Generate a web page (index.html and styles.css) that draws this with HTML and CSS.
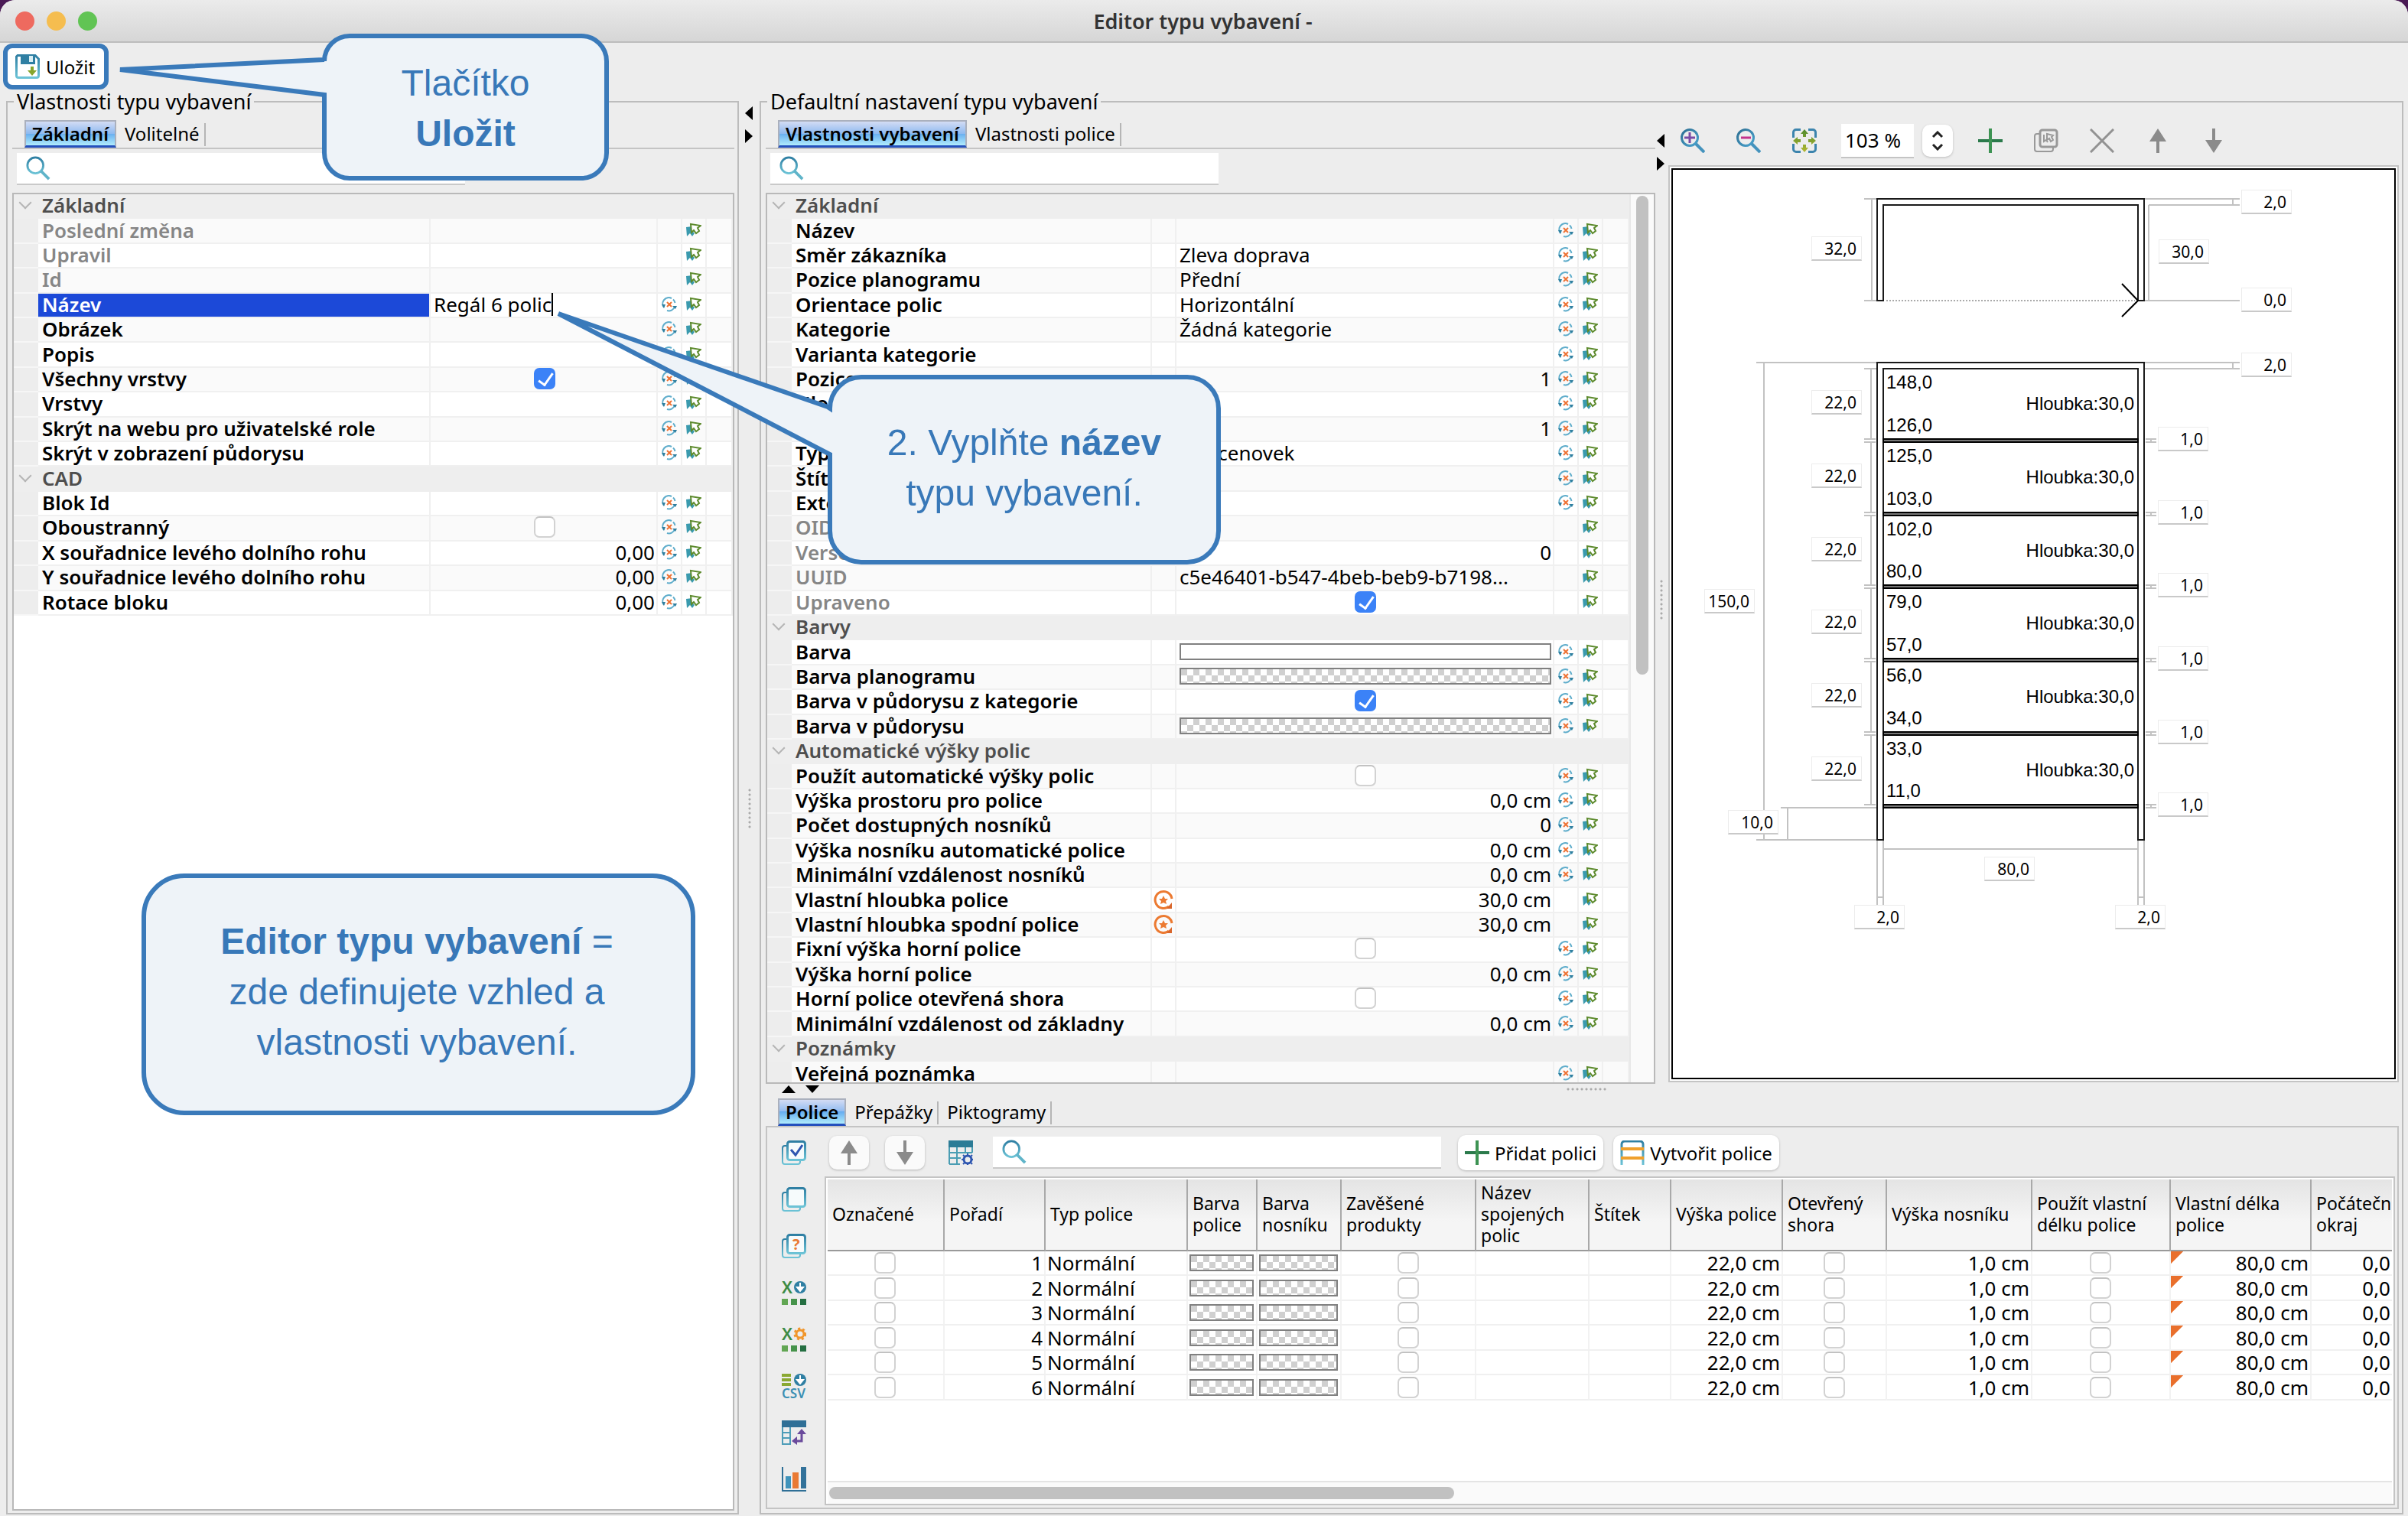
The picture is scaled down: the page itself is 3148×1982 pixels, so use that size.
FILE: index.html
```
<!DOCTYPE html>
<html lang="cs">
<head>
	<meta charset="UTF-8">
	<title>Editor typu vybavení</title>
	<link rel="stylesheet" href="styles.css">
</head>
<body>
	<!-- icons -->
	<svg class="defs" width="0" height="0" aria-hidden="true">
		<defs>
			<linearGradient id="teal" x1="0" y1="0" x2="0" y2="1"><stop offset="0" stop-color="#2f7fa3"/><stop offset="1" stop-color="#6cc3d6"/></linearGradient>
			<linearGradient id="blue" x1="0" y1="0" x2="1" y2="1"><stop offset="0" stop-color="#2d6f92"/><stop offset="1" stop-color="#4aa3cf"/></linearGradient>
			<linearGradient id="lime" x1="0" y1="0" x2="0" y2="1"><stop offset="0" stop-color="#4f8a2f"/><stop offset="1" stop-color="#b3b82e"/></linearGradient>
		</defs>
		<symbol id="i-search" viewBox="0 0 34 34"><circle cx="13" cy="13" r="11" fill="none" stroke="url(#teal)" stroke-width="3"/><path d="M21 21L32 32" stroke="#5fb4c9" stroke-width="4"/></symbol>
		<symbol id="i-save" viewBox="0 0 32 32"><path d="M3 1.500H26L30.500 6V28a2.500 2.500 0 0 1-2.500 2.500H4A2.500 2.500 0 0 1 1.500 28V3z" fill="#fff" stroke="url(#teal)" stroke-width="3"/><path d="M7 1H26V13H7z" fill="#2f7fa3"/><path d="M18 2h5v8h-5z" fill="#d8eef4"/><path d="M20 16h4v5h4l-6 7-6-7h4z" fill="#86a52c"/></symbol>
		<symbol id="i-reset" viewBox="0 0 20 20"><path d="M3 14A8 8 0 0 1 13 2M15 3.500A8 8 0 0 1 17.500 8M17 13A8 8 0 0 1 7 18" fill="none" stroke="#5fadcb" stroke-width="2"/><path d="M0 10h5l-2 5zM20 12h-6l4 4z" fill="#2f7f9f"/><path d="M7 7l6 6M13 7l-6 6" stroke="#ee7132" stroke-width="2"/></symbol>
		<symbol id="i-copy" viewBox="0 0 20 20"><path d="M0 6L8 5V11L11 14 8 18 5 14 1 18z" fill="#3a9aae"/><path d="M6 2L19 4 15 7 17 11 13 14 10 10 7 13z" fill="#fff" stroke="#5c8a2c" stroke-width="2"/></symbol>
		<symbol id="i-star" viewBox="0 0 26 26"><path d="M24 12A11 11 0 1 0 20 22" fill="none" stroke="#ec7a31" stroke-width="3"/><path d="M24 17v8h-7z" fill="#d9662b"/><path d="M13 8l2 4 4 0-3 3 1 4-4-2-4 2 1-4-3-3 4 0z" fill="#ec7a31"/></symbol>
		<symbol id="i-zoomin" viewBox="0 0 32 32"><circle cx="12" cy="12" r="10.500" fill="none" stroke="url(#blue)" stroke-width="3"/><path d="M20 20L31 31" stroke="#4593bd" stroke-width="4"/><path d="M5 12h14M12 5v14" stroke="#7a4aa6" stroke-width="3"/></symbol>
		<symbol id="i-zoomout" viewBox="0 0 32 32"><circle cx="12" cy="12" r="10.500" fill="none" stroke="url(#blue)" stroke-width="3"/><path d="M20 20L31 31" stroke="#4593bd" stroke-width="4"/><path d="M6 12h13" stroke="#c2328c" stroke-width="3"/></symbol>
		<symbol id="i-fit" viewBox="0 0 32 32"><path d="M11 1.500H5A3.500 3.500 0 0 0 1.500 5v7M21 1.500h6A3.500 3.500 0 0 1 30.500 5v7M11 30.500H5A3.500 3.500 0 0 1 1.500 27v-7M21 30.500h6a3.500 3.500 0 0 0 3.500-3.500v-7" fill="none" stroke="#3c84ad" stroke-width="3"/><path d="M16 1l5 6h-3v4h-4V7h-3zM16 31l5-6h-3v-4h-4v4h-3zM1 16l6-5v3h4v4H7v3zM31 16l-6-5v3h-4v4h4v3z" fill="url(#lime)"/></symbol>
		<symbol id="i-plus" viewBox="0 0 32 32"><path d="M0 16h32" stroke="#2b7a4b" stroke-width="4"/><path d="M16 0v32" stroke="#3d9353" stroke-width="4"/></symbol>
		<symbol id="i-dup" viewBox="0 0 32 32"><path d="M8 7H4a3 3 0 0 0-3 3v17a3 3 0 0 0 3 3h18a3 3 0 0 0 3-3v-3" fill="none" stroke="#999" stroke-width="2"/><rect x="8" y="2" width="22" height="22" rx="3" fill="none" stroke="#999" stroke-width="3"/><path d="M13 8v9l3-2 2 3M17 7l8 2-2 2 2 4-3 2-2-4-3 2z" fill="none" stroke="#999" stroke-width="2"/></symbol>
		<symbol id="i-cross" viewBox="0 0 32 32"><path d="M1 1l30 30M31 1L1 31" stroke="#929292" stroke-width="3"/></symbol>
		<symbol id="i-up" viewBox="0 0 32 32"><path d="M16 0l11 17h-9v15h-4V17H5z" fill="#8b8b8b"/></symbol>
		<symbol id="i-down" viewBox="0 0 32 32"><path d="M16 32l11-17h-9V0h-4v15H5z" fill="#8b8b8b"/></symbol>
		<symbol id="i-tablecfg" viewBox="0 0 32 32"><path d="M0 0h32v9H0z" fill="#2c7c96"/><path d="M1 9v22M11 9v22M22 9v8M31 9v7M1 16h30M1 23h15M1 31h14" fill="none" stroke="#4a9db3" stroke-width="2"/><circle cx="25" cy="25" r="5" fill="none" stroke="#2e56b0" stroke-width="3"/><path d="M25 17v3M25 30v2M17 25h3M30 25h2M19 19l2 2M29 29l2 2M31 19l-2 2M19 31l2-2" stroke="#2e56b0" stroke-width="2"/></symbol>
		<symbol id="i-sheets" viewBox="0 0 32 32"><path d="M7 7H4a3 3 0 0 0-3 3v18a3 3 0 0 0 3 3h17a3 3 0 0 0 3-3v-2" fill="none" stroke="url(#teal)" stroke-width="2"/><rect x="7.500" y="1.500" width="23" height="24" rx="3" fill="#f6fbfc" stroke="url(#teal)" stroke-width="3"/></symbol>
		<symbol id="i-dots" viewBox="0 0 32 32"><path d="M0 24h8v8H0z" fill="#62a653"/><path d="M12 24h8v8h-8z" fill="#46934b"/><path d="M24 24h8v8h-8z" fill="#256f42"/></symbol>
		<symbol id="i-shelf" viewBox="0 0 32 32"><path d="M2 32V5a4 4 0 0 1 4-4h20a4 4 0 0 1 4 4v27" fill="none" stroke="url(#teal)" stroke-width="3"/><path d="M1 11h30M1 23h30" stroke="#f0a02c" stroke-width="4"/></symbol>
		<symbol id="i-flip" viewBox="0 0 32 32"><path d="M0 0h32v9H0z" fill="#2f6f96"/><path d="M1 9v22h10V9M1 16h10M1 23h10" fill="none" stroke="#4e9cb8" stroke-width="2"/><path d="M26 16v11H17" fill="none" stroke="#6a4a9c" stroke-width="3"/><path d="M26 11l6 7H20zM13 27l7-6v11z" fill="#6a4a9c"/></symbol>
		<symbol id="i-chart" viewBox="0 0 32 32"><path d="M1 0v31h31" fill="none" stroke="#2f6f96" stroke-width="2"/><path d="M5 12h7v16H5z" fill="#3f93bb"/><path d="M14 7h8v21h-8z" fill="#ea7a33"/><path d="M25 0h7v28h-7z" fill="#33729a"/></symbol>
	</svg>

	<header class="titlebar">
		<span class="light red"></span><span class="light yellow"></span><span class="light green"></span>
		<h1>Editor typu vybavení -</h1>
	</header>
	<div class="toolbar">
		<button class="save" type="button"><svg class="icon"><use href="#i-save"/></svg>Uložit</button>
	</div>

	<main class="workspace">
		<fieldset class="group">
			<legend>Vlastnosti typu vybavení</legend>
			<nav class="tabs">
				<button type="button" class="tab on">Základní</button>
				<button type="button" class="tab">Volitelné</button>
			</nav>
			<div class="search"><svg class="icon"><use href="#i-search"/></svg><input type="search" aria-label="Hledat vlastnost"></div>
			<div class="grid-box">
				<table class="props" id="typeProps">
					<colgroup><col class="c-gutter"><col class="c-name-wide"><col><col class="c-icon"><col class="c-icon"><col class="c-end"></colgroup>
					<tbody></tbody>
				</table>
			</div>
		</fieldset>

		<div class="splitter"><i class="arrow left"></i><i class="arrow right"></i><i class="grip"></i></div>

		<fieldset class="group">
			<legend>Defaultní nastavení typu vybavení</legend>
			<div class="upper">
				<section class="defaults">
					<nav class="tabs">
						<button type="button" class="tab on">Vlastnosti vybavení</button>
						<button type="button" class="tab">Vlastnosti police</button>
					</nav>
					<div class="search"><svg class="icon"><use href="#i-search"/></svg><input type="search" aria-label="Hledat vlastnost vybavení"></div>
					<div class="grid-box">
						<table class="props long" id="defaultProps">
							<colgroup><col class="c-gutter"><col class="c-name"><col class="c-icon"><col><col class="c-icon"><col class="c-icon"><col class="c-end"></colgroup>
							<tbody></tbody>
						</table>
						<div class="vscroll"><i></i></div>
					</div>
				</section>
				<div class="splitter inner"><i class="arrow left"></i><i class="arrow right"></i><i class="grip"></i></div>
				<section class="preview">
					<div class="preview-bar">
						<button type="button" class="tool" aria-label="Přiblížit"><svg class="icon"><use href="#i-zoomin"/></svg></button>
						<button type="button" class="tool" aria-label="Oddálit"><svg class="icon"><use href="#i-zoomout"/></svg></button>
						<button type="button" class="tool" aria-label="Přizpůsobit"><svg class="icon"><use href="#i-fit"/></svg></button>
						<input class="zoom" type="text" value="103 %" aria-label="Měřítko">
						<button type="button" class="stepper" aria-label="Změnit měřítko"><svg width="16" height="26" viewBox="0 0 16 26"><path d="M2 8l6-6 6 6M2 18l6 6 6-6" fill="none" stroke="#222" stroke-width="3"/></svg></button>
						<button type="button" class="tool" aria-label="Přidat"><svg class="icon"><use href="#i-plus"/></svg></button>
						<button type="button" class="tool" aria-label="Duplikovat"><svg class="icon"><use href="#i-dup"/></svg></button>
						<button type="button" class="tool" aria-label="Odstranit"><svg class="icon"><use href="#i-cross"/></svg></button>
						<button type="button" class="tool" aria-label="Nahoru"><svg class="icon"><use href="#i-up"/></svg></button>
						<button type="button" class="tool" aria-label="Dolů"><svg class="icon"><use href="#i-down"/></svg></button>
					</div>
					<div class="canvas-frame">
						<div class="canvas" id="canvas"><svg id="drawing" width="900" height="1100"></svg></div>
					</div>
				</section>
			</div>

			<div class="hsplitter"><i class="arrow up"></i><i class="arrow down"></i><i class="grip"></i></div>

			<section class="lower">
				<nav class="tabs">
					<button type="button" class="tab on">Police</button>
					<button type="button" class="tab">Přepážky</button>
					<button type="button" class="tab">Piktogramy</button>
				</nav>
				<div class="shelves">
					<div class="side">
						<button type="button" class="tool" aria-label="Označit vše"><svg class="icon" viewBox="0 0 32 32"><use href="#i-sheets"/><path d="M12 12l6 7 9-13" fill="none" stroke="#2e56b0" stroke-width="3"/></svg></button>
						<button type="button" class="tool" aria-label="Odznačit vše"><svg class="icon"><use href="#i-sheets"/></svg></button>
						<button type="button" class="tool" aria-label="Označit podle"><svg class="icon" viewBox="0 0 32 32"><use href="#i-sheets"/><text x="14" y="21" font-size="20" font-weight="700" fill="#ea7a33">?</text></svg></button>
						<button type="button" class="tool" aria-label="Export do Excelu"><svg class="icon" viewBox="0 0 32 32"><use href="#i-dots"/><text x="0" y="17" font-size="22" font-weight="600" fill="#3c8b45">X</text><circle cx="24" cy="9" r="8" fill="#2f7fa3"/><path d="M24 3v6M24 14l-4-5h8z" fill="#fff" stroke="#fff" stroke-width="2"/></svg></button>
						<button type="button" class="tool" aria-label="Nastavení exportu"><svg class="icon" viewBox="0 0 32 32"><use href="#i-dots"/><text x="0" y="17" font-size="22" font-weight="600" fill="#3c8b45">X</text><circle cx="24" cy="9" r="5" fill="none" stroke="#f0962c" stroke-width="3"/><circle cx="24" cy="9" r="7" fill="none" stroke="#f0962c" stroke-width="3" stroke-dasharray="3 3"/></svg></button>
						<button type="button" class="tool" aria-label="Export do CSV"><svg class="icon csv" viewBox="0 0 32 32"><path d="M0 2h12M0 8h12M0 14h12" stroke="#8aa832" stroke-width="4"/><circle cx="24" cy="8" r="8" fill="#2f7fa3"/><path d="M24 2v6M24 13l-4-5h8z" fill="#fff" stroke="#fff" stroke-width="2"/><text x="0" y="32" font-size="17" font-weight="600" fill="#3c8fb3">CSV</text></svg></button>
						<button type="button" class="tool" aria-label="Transponovat"><svg class="icon"><use href="#i-flip"/></svg></button>
						<button type="button" class="tool" aria-label="Graf"><svg class="icon"><use href="#i-chart"/></svg></button>
					</div>
					<div class="shelves-main">
						<div class="shelves-bar">
							<button type="button" class="push square" aria-label="Posunout nahoru"><svg class="icon"><use href="#i-up"/></svg></button>
							<button type="button" class="push square" aria-label="Posunout dolů"><svg class="icon"><use href="#i-down"/></svg></button>
							<button type="button" class="tool columns" aria-label="Nastavení sloupců"><svg class="icon"><use href="#i-tablecfg"/></svg></button>
							<div class="search"><svg class="icon"><use href="#i-search"/></svg><input type="search" aria-label="Hledat polici"></div>
							<button type="button" class="push add"><svg class="icon"><use href="#i-plus"/></svg>Přidat polici</button>
							<button type="button" class="push"><svg class="icon"><use href="#i-shelf"/></svg>Vytvořit police</button>
						</div>
						<div class="shelf-box">
							<table class="shelf-table">
								<colgroup><col style="width:153px"><col style="width:132px"><col style="width:186px"><col style="width:91px"><col style="width:110px"><col style="width:176px"><col style="width:148px"><col style="width:107px"><col style="width:146px"><col style="width:136px"><col style="width:190px"><col style="width:181px"><col style="width:184px"><col></colgroup>
								<thead>
									<tr><th>Označené</th><th>Pořadí</th><th>Typ police</th><th>Barva<br>police</th><th>Barva<br>nosníku</th><th>Zavěšené<br>produkty</th><th>Název<br>spojených<br>polic</th><th>Štítek</th><th>Výška police</th><th>Otevřený<br>shora</th><th>Výška nosníku</th><th>Použít vlastní<br>délku police</th><th>Vlastní délka<br>police</th><th>Počátečn<br>okraj</th></tr>
								</thead>
								<tbody id="shelfRows"></tbody>
							</table>
							<div class="hscroll"><i></i></div>
						</div>
					</div>
				</div>
			</section>
		</fieldset>
	</main>

	<!-- help bubbles -->
	<aside class="callout save-help">
		<svg width="375" height="192"><path d="M3 36A33 33 0 0 1 36 3H339A33 33 0 0 1 372 36V156A33 33 0 0 1 339 189H36A33 33 0 0 1 3 156V80L-264 47L3 34z"/></svg>
		<p>Tlačítko<br><b>Uložit</b></p>
	</aside>
	<aside class="callout name-help">
		<svg width="514" height="248"><path d="M3 44A41 41 0 0 1 44 3H470A41 41 0 0 1 511 44V204A41 41 0 0 1 470 245H44A41 41 0 0 1 3 204V104L-352 -80L0 42z"/></svg>
		<p>2. Vyplňte <b>název</b><br>typu vybavení.</p>
	</aside>
	<aside class="callout intro-help">
		<p><b>Editor typu vybavení</b> =<br>zde definujete vzhled a<br>vlastnosti vybavení.</p>
	</aside>

	<script src="script.js"></script>
</body>
</html>
```
FILE: styles.css
```
*{
	box-sizing: border-box;
	margin: 0;
	padding: 0;
}
html{
	background: #4a1a55;
}
body{
	height: 100vh;
	display: flex;
	flex-direction: column;
	overflow: hidden;
	position: relative;
	border-radius: 20px 20px 0 0;
	background: #ededed;
	color: #000;
	font-family: "Noto Sans", "Open Sans", sans-serif;
	font-size: 26px;
}
button, input{
	font: inherit;
	color: inherit;
	border: 0;
	background: none;
	outline: none;
}
.defs{ position: absolute; }
.icon{
	width: 32px;
	height: 32px;
	flex: none;
	display: block;
}
.csv{ overflow: visible; }

/* title bar */
.titlebar{
	height: 56px;
	flex: none;
	display: flex;
	align-items: center;
	gap: 16px;
	padding-left: 20px;
	background: linear-gradient(#ebebeb, #d6d6d6);
	border-bottom: 2px solid #bdbdbd;
}
.titlebar h1{
	flex: 1;
	margin-right: 146px;
	text-align: center;
	font-size: 27px;
	font-weight: 600;
	color: #333;
}
.light{
	width: 25px;
	height: 25px;
	border-radius: 50%;
}
.red{ background: #ee6a5f; }
.yellow{ background: #f5bd4f; }
.green{ background: #61c454; }

.toolbar{
	height: 62px;
	flex: none;
	padding: 1px 4px;
}
.save{
	height: 60px;
	display: flex;
	align-items: center;
	gap: 8px;
	padding: 0 12px 0 10px;
	border: 6px solid #3a7aba;
	border-radius: 12px;
	background: #fff;
	font-size: 24px;
}

/* panels */
.workspace{
	flex: 1;
	min-height: 0;
	display: grid;
	grid-template-columns: minmax(0, 958fr) 27px minmax(0, 2149fr);
	padding: 0 6px 2px 8px;
}
.group{
	min-width: 0;
	min-height: 0;
	display: flex;
	flex-direction: column;
	border: 2px solid #bcbcbc;
	padding: 0 4px 3px 6px;
}
.group legend{
	margin-left: 2px;
	padding: 0 4px;
	font-size: 27px;
	line-height: 30px;
}
.tabs{
	flex: none;
	display: flex;
	height: 38px;
	padding-left: 16px;
	border-bottom: 2px solid #c4c4c4;
	font-size: 24px;
}
.tab{
	position: relative;
	height: 36px;
	padding: 0 8px 0 11px;
	line-height: 34px;
}
.tab::after{
	content: "";
	position: absolute;
	right: 0;
	top: 4px;
	height: 30px;
	border-right: 2px solid #b5b5b5;
}
.tab.on{
	padding: 0 8px;
	border: 2px solid #aab0bd;
	border-bottom: 3px solid #2450bd;
	background: linear-gradient(#d3dcf4, #8fbaf0 50%, #66adf0 50%, #b0ecfc);
	font-weight: 600;
	line-height: 30px;
}
.tab.on::after{ display: none; }
.group > .tabs, .defaults > .tabs{ margin-top: 9px; }

.search{
	width: 586px;
	height: 42px;
	flex: none;
	display: flex;
	align-items: center;
	gap: 8px;
	padding: 0 12px;
	background: #fff;
	border-bottom: 2px solid #c9c9c9;
}
.search input{
	flex: 1;
	min-width: 0;
	font-size: 24px;
}
.group > .search, .defaults > .search{ margin: 5px 0 10px 6px; }
.grid-box{
	flex: 1;
	min-height: 0;
	display: flex;
	align-items: flex-start;
	overflow: hidden;
	border: 2px solid #b9b9b9;
	background: #fff;
}

/* property tables */
.props{
	flex: 1;
	min-width: 0;
	height: 551px;
	table-layout: fixed;
	border-collapse: separate;
	border-spacing: 0;
	line-height: 28px;
	white-space: nowrap;
}
.props.long{ height: 1167px; }
.c-gutter, .c-icon{ width: 32px; }
.c-name-wide{ width: 513px; }
.c-name{ width: 471px; }
.c-end{ width: 34px; }
.props td{
	padding-bottom: 2px;
	border-right: 2px solid #f0f0f0;
	border-bottom: 2px solid #f0f0f0;
}
.props tr:nth-child(even) td{ background: #fafafa; }
.props tr td.gutter{
	background: #ededed;
	border-right: 0;
	border-bottom-color: #f6f6f6;
}
.props .name{
	padding-left: 5px;
	font-weight: 600;
}
.props .off .name{ color: #868686; }
.props tr.head td{
	background: #eee;
	border-color: #eee;
	color: #4e4e4e;
	font-weight: 600;
}
.props .head .name{ color: #4e4e4e; }
.props .val{
	padding-left: 4px;
	padding-right: 2px;
}
.props .num{ text-align: right; }
.props .sel .name{
	background: #1c49d8;
	color: #fff;
}
.chev{
	width: 12px;
	height: 12px;
	display: block;
	margin: -6px auto 0;
	border: solid #b5b5b5;
	border-width: 0 2px 2px 0;
	transform: rotate(45deg);
}
/* field being edited, with the cursor bar behind its last letter */
.edit{
	field-sizing: content;
	max-width: 100%;
	height: 36px;
	display: block;
	margin: -4px 0;
	background: linear-gradient(#000, #000) no-repeat right center / 2px 30px;
	padding-right: 2px;
	caret-color: transparent;
}
.mini{
	width: 20px;
	height: 20px;
	display: block;
	margin: 0 auto;
}
.mini.star{
	width: 26px;
	height: 26px;
}
.check{
	appearance: none;
	position: relative;
	width: 28px;
	height: 28px;
	display: block;
	margin: 0 auto;
	border: 2px solid #d2d2d2;
	border-top-color: #c2c2c2;
	border-radius: 7px;
	background: #fff;
}
.check:checked{
	border-color: #3b82f7;
	background: #3b82f7;
}
.check:checked::after{
	content: "";
	position: absolute;
	left: 8px;
	top: 1px;
	width: 8px;
	height: 17px;
	border: solid #fff;
	border-width: 0 3px 3px 0;
	transform: rotate(35deg);
}
.swatch{
	display: block;
	width: 100%;
	height: 22px;
	border: 2px solid #808080;
	background: #fff;
}
.swatch.clear{
	background: repeating-conic-gradient(#fff 0 25%, #d0d0d0 0 50%) 0 0 / 16px 16px;
}
.vscroll{
	width: 32px;
	align-self: stretch;
	flex: none;
	padding: 2px 7px 0 7px;
	background: #fafafa;
	border-left: 2px solid #e8e8e8;
}
.vscroll i{
	display: block;
	height: 626px;
	border-radius: 8px;
	background: #c1c1c1;
}

/* splitters */
.splitter{
	position: relative;
	padding: 21px 0 0 8px;
}
.splitter.inner{ padding: 27px 0 0 2px; }
.arrow{
	display: block;
	width: 10px;
	height: 18px;
	margin-bottom: 12px;
	background: #000;
}
.arrow.left{ clip-path: polygon(100% 0, 100% 100%, 0 50%); }
.arrow.right{ clip-path: polygon(0 0, 100% 50%, 0 100%); }
.arrow.up, .arrow.down{
	width: 18px;
	height: 10px;
	margin: 0;
}
.arrow.up{ clip-path: polygon(50% 0, 100% 100%, 0 100%); }
.arrow.down{ clip-path: polygon(0 0, 100% 0, 50% 100%); }
.grip{
	position: absolute;
	left: 12px;
	top: 49%;
	width: 4px;
	height: 54px;
	background: radial-gradient(circle, #aaa 1px, transparent 2px) 0 0 / 4px 6px;
}
.inner .grip{ left: 6px; top: 48%; }
.hsplitter{
	position: relative;
	height: 19px;
	flex: none;
	display: flex;
	gap: 13px;
	padding: 2px 0 0 21px;
}
.hsplitter .grip{
	left: 49%;
	top: 5px;
	width: 54px;
	height: 4px;
	background-size: 6px 4px;
}

.upper{
	flex: 1;
	min-height: 0;
	display: grid;
	grid-template-columns: minmax(0, 1163fr) 17px minmax(0, 955fr);
}
.defaults, .preview{
	min-height: 0;
	display: flex;
	flex-direction: column;
}

/* preview */
.preview-bar{
	height: 68px;
	flex: none;
	display: flex;
	align-items: center;
	gap: 41px;
	padding: 4px 0 0 16px;
}
.tool{
	display: block;
	cursor: pointer;
}
.zoom{
	width: 95px;
	height: 45px;
	margin-left: -9px;
	padding-left: 5px;
	background: #fff;
	border-bottom: 2px solid #c4c4c4;
	font-size: 26px;
}
.stepper{
	width: 40px;
	height: 42px;
	display: grid;
	place-items: center;
	margin: 0 -8px 0 -30px;
	border-radius: 10px;
	background: #fff;
	box-shadow: 0 1px 3px #bbb;
}
.canvas-frame{
	flex: 1;
	min-height: 0;
	margin-bottom: 2px;
	padding: 2px;
	border: 2px solid #c4c4c4;
	background: #fff;
}
.canvas{
	position: relative;
	height: 100%;
	overflow: hidden;
	border: 2px solid #000;
}
.canvas svg{ display: block; }
.canvas text{
	font-family: "Liberation Sans", Arial, sans-serif;
	font-size: 24px;
}
.dim{
	position: absolute;
	width: 66px;
	height: 32px;
	padding-right: 6px;
	border: 1px solid #ececec;
	border-bottom: 2px solid #c9c9c9;
	background: #fff;
	font-size: 21px;
	text-align: right;
}

/* shelves */
.lower{
	height: 539px;
	flex: none;
	display: flex;
	flex-direction: column;
}
.shelves{
	flex: 1;
	min-height: 0;
	display: flex;
	margin-bottom: 2px;
	border: 2px solid #c4c4c4;
	border-top: 0;
}
.side{
	width: 75px;
	flex: none;
	display: flex;
	flex-direction: column;
	align-items: center;
	gap: 29px;
	padding: 17px 5px 0 0;
}
.shelves-main{
	flex: 1;
	min-width: 0;
	display: flex;
	flex-direction: column;
	padding: 0 3px 3px 0;
}
.shelves-bar{
	height: 64px;
	flex: none;
	display: flex;
	align-items: center;
	padding: 2px 0 0 6px;
	font-size: 24px;
}
.push{
	height: 46px;
	display: flex;
	align-items: center;
	gap: 7px;
	margin-right: 13px;
	padding: 0 9px;
	border-radius: 10px;
	background: #fff;
	box-shadow: 0 1px 3px #b5b5b5;
}
.push.square{
	height: 44px;
	padding: 0 10px;
	margin-right: 21px;
	background: #fafafa;
}
.columns{ margin: 0 26px 0 10px; }
.push.add{ margin-left: 22px; }
.shelf-box{
	flex: 1;
	min-height: 0;
	display: flex;
	flex-direction: column;
	justify-content: space-between;
	padding: 2px 2px 0;
	border: 2px solid #c4c4c4;
	background: #fff;
}
.shelf-table{
	width: 100%;
	table-layout: fixed;
	border-collapse: separate;
	border-spacing: 0;
	white-space: nowrap;
}
.shelf-table th{
	height: 94px;
	padding: 0 0 2px 6px;
	border-right: 2px solid #a9a9a9;
	border-bottom: 2px solid #9a9a9a;
	background: linear-gradient(#e4e4e4, #f5f5f5 60%);
	font-size: 23px;
	font-weight: 400;
	line-height: 28px;
	text-align: left;
}
.shelf-table th:last-child, .shelf-table td:last-child{ border-right: 0; }
.shelf-table td{
	height: 32px;
	padding: 0 3px 0 2px;
	border-right: 2px solid #f2f2f2;
	border-bottom: 2px solid #f0f0f0;
	line-height: 30px;
}
.shelf-table td.num{
	padding-right: 2px;
	text-align: right;
}
.shelf-table tr:nth-child(even) td{ height: 33px; }
.shelf-table .own{
	background: linear-gradient(135deg, #e96f2c 11px, transparent 12px) no-repeat 0 0 / 16px 16px;
}
.hscroll{
	height: 30px;
	flex: none;
	padding: 6px 0 0 2px;
	border-top: 2px solid #e4e4e4;
	background: #fafafa;
}
.hscroll i{
	display: block;
	width: 40%;
	height: 16px;
	border-radius: 8px;
	background: #c1c1c1;
}

/* help bubbles */
.callout{
	position: absolute;
	display: grid;
	place-items: center;
	color: #3878b8;
	font-family: "Liberation Sans", Arial, sans-serif;
	font-size: 48px;
	line-height: 66px;
	text-align: center;
}
.callout svg{
	position: absolute;
	left: 0;
	top: 0;
	overflow: visible;
}
.callout path{
	fill: #eef3f8;
	stroke: #3a7aba;
	stroke-width: 6px;
}
.callout p{ position: relative; }
.save-help{
	left: 421px;
	top: 44px;
	width: 375px;
	height: 192px;
	padding-top: 4px;
}
.name-help{
	left: 1082px;
	top: 490px;
	width: 514px;
	height: 248px;
	padding-bottom: 4px;
}
.intro-help{
	left: 185px;
	top: 1142px;
	width: 724px;
	height: 316px;
	padding: 0 4px 6px 0;
	border: 6px solid #3a7aba;
	border-radius: 56px;
	background: #eef3f8;
}
```
FILE: script.js
```
window.onload=function(){
	var RESET='<svg class="mini"><use href="#i-reset"/></svg>';
	var COPY='<svg class="mini"><use href="#i-copy"/></svg>';
	var STAR='<svg class="mini star"><use href="#i-star"/></svg>';

	// [name, value, kind, flags]; kind: t text, n number, c checkbox, s swatch, e editor
	// flags: o = read only, d = own value set (no reset)
	var typeProps=[
		['Základní'],
		['Poslední změna','','t','o'],['Upravil','','t','o'],['Id','','t','o'],
		['Název','Regál 6 polic','e'],['Obrázek','','t'],['Popis','','t'],
		['Všechny vrstvy',true,'c'],['Vrstvy','','t'],
		['Skrýt na webu pro uživatelské role','','t'],['Skrýt v zobrazení půdorysu','','t'],
		['CAD'],
		['Blok Id','','t'],['Oboustranný',false,'c'],
		['X souřadnice levého dolního rohu','0,00','n'],
		['Y souřadnice levého dolního rohu','0,00','n'],
		['Rotace bloku','0,00','n']
	];
	var defaultProps=[
		['Základní'],
		['Název','','t'],['Směr zákazníka','Zleva doprava','t'],['Pozice planogramu','Přední','t'],
		['Orientace polic','Horizontální','t'],['Kategorie','Žádná kategorie','t'],
		['Varianta kategorie','','t'],['Pozice','1','n'],['Hloubka','','t'],['Počet','1','n'],
		['Typ cenovek','Bez cenovek','t'],['Štítek','','t'],['Externí Id','','t'],
		['OID','','t','o'],['Verse','0','n','o'],
		['UUID','c5e46401-b547-4beb-beb9-b7198...','t','o'],['Upraveno',true,'c','o'],
		['Barvy'],
		['Barva','','s'],['Barva planogramu','clear','s'],
		['Barva v půdorysu z kategorie',true,'c'],['Barva v půdorysu','clear','s'],
		['Automatické výšky polic'],
		['Použít automatické výšky polic',false,'c'],['Výška prostoru pro police','0,0 cm','n'],
		['Počet dostupných nosníků','0','n'],['Výška nosníku automatické police','0,0 cm','n'],
		['Minimální vzdálenost nosníků','0,0 cm','n'],['Vlastní hloubka police','30,0 cm','n','d'],
		['Vlastní hloubka spodní police','30,0 cm','n','d'],['Fixní výška horní police',false,'c'],
		['Výška horní police','0,0 cm','n'],['Horní police otevřená shora',false,'c'],
		['Minimální vzdálenost od základny','0,0 cm','n'],
		['Poznámky'],
		['Veřejná poznámka','','t']
	];

	function check(name,on){
		return '<input type="checkbox" class="check" aria-label="'+name+'"'+(on?' checked':'')+'>';
	}
	function value(r){
		if(r[2]=='c') return check(r[0],r[1]);
		if(r[2]=='s') return '<span class="swatch '+r[1]+'"></span>';
		if(r[2]=='e') return '<input class="edit" id="typeName" type="text" value="'+r[1]+'">';
		return r[1];
	}
	function fill(id,rows,marks){
		var html='';
		for(var i=0;i<rows.length;i++){
			var r=rows[i],flag=r[3]||'';
			if(r.length==1){
				html+='<tr class="head"><td><i class="chev"></i></td><td class="name" colspan="'+(marks?6:5)+'">'+r[0]+'</td></tr>';
				continue;
			}
			var name=r[2]=='e'?'<label for="typeName">'+r[0]+'</label>':r[0];
			html+='<tr class="'+(flag=='o'?'off':r[2]=='e'?'sel':'')+'"><td class="gutter"></td><td class="name">'+name+'</td>';
			if(marks) html+='<td>'+(flag=='d'?STAR:'')+'</td>';
			html+='<td class="val'+(r[2]=='n'?' num':'')+'">'+value(r)+'</td>';
			html+='<td>'+(flag?'':RESET)+'</td><td>'+COPY+'</td><td></td></tr>';
		}
		document.getElementById(id).tBodies[0].innerHTML=html;
	}
	fill('typeProps',typeProps,false);
	fill('defaultProps',defaultProps,true);

	// shelf table
	var shelves='';
	for(var n=1;n<=6;n++){
		shelves+='<tr><td>'+check('Označené '+n)+'</td><td class="num">'+n+'</td><td>Normální</td>'+
			'<td><span class="swatch clear"></span></td><td><span class="swatch clear"></span></td>'+
			'<td>'+check('Zavěšené produkty '+n)+'</td><td></td><td></td><td class="num">22,0 cm</td>'+
			'<td>'+check('Otevřený shora '+n)+'</td><td class="num">1,0 cm</td>'+
			'<td>'+check('Použít vlastní délku '+n)+'</td><td class="num own">80,0 cm</td><td class="num">0,0</td></tr>';
	}
	document.getElementById('shelfRows').innerHTML=shelves;

	// drawing of the unit: plan above, front view below
	var svg='',dims='';
	function line(x1,y1,x2,y2){
		svg+='<path d="M'+x1+' '+y1+'L'+x2+' '+y2+'" stroke="#c2c2c2" stroke-width="2"/>';
	}
	function dim(x,y,text){
		dims+='<input class="dim" type="text" aria-label="Kóta" value="'+text+'" style="left:'+x+'px;top:'+y+'px">';
	}
	function frame(top,bottom){
		svg+='<path d="M267 '+bottom+'V'+top+'H616V'+bottom+'H608V'+(top+8)+'H275V'+bottom+'z" fill="#fff" stroke="#1a1a1a" stroke-width="2"/>';
	}
	// plan
	line(250,38,267,38);line(250,171,267,171);line(260,38,260,171);
	line(616,38,741,38);line(622,46,741,46);line(732,38,732,46);
	line(622,46,622,171);line(616,171,741,171);
	frame(38,171);
	svg+='<path d="M279 171H604" stroke="#555" stroke-width="1" stroke-dasharray="2 2"/>';
	svg+='<path d="M587 149L608 171L587 192" fill="none" stroke="#000" stroke-width="2"/>';
	dim(181,87,'32,0');dim(635,91,'30,0');dim(743,26,'2,0');dim(743,154,'0,0');
	// front
	line(109,252,267,252);line(119,252,119,876);line(109,876,267,876);
	line(250,260,267,260);
	line(616,252,741,252);line(616,260,741,260);line(732,252,732,260);
	line(141,834,267,834);line(150,834,150,876);
	line(267,876,267,961);line(275,876,275,961);line(608,876,608,961);line(616,876,616,961);
	line(275,888,608,888);line(267,951,275,951);line(608,951,616,951);
	dim(743,239,'2,0');
	frame(252,876);
	var from=260;
	for(var k=0;k<6;k++){
		var h=126-23*k,y=Math.round(876-h*4.16);
		line(259,from,259,y);
		line(250,y,265,y);line(250,y+4,265,y+4);
		line(618,y,632,y);line(618,y+4,632,y+4);line(625,y,625,y+4);
		svg+='<rect x="275" y="'+y+'" width="333" height="4" fill="#777" stroke="#000" stroke-width="2"/>';
		svg+='<text x="279" y="'+(from+26)+'">'+(h+22)+',0</text><text x="279" y="'+(y-10)+'">'+h+',0</text>';
		svg+='<text x="603" y="'+(Math.round((from+y)/2)+8)+'" text-anchor="end">Hloubka:30,0</text>';
		dim(181,Math.round((from+y)/2)-18,'22,0');
		dim(634,y-16,'1,0');
		from=y+4;
	}
	dim(72,837,'10,0');dim(41,548,'150,0');dim(407,898,'80,0');dim(237,961,'2,0');dim(578,961,'2,0');
	document.getElementById('drawing').innerHTML=svg;
	document.getElementById('canvas').insertAdjacentHTML('beforeend',dims);

	// the name is being edited
	var edit=document.getElementById('typeName');
	edit.focus();
	edit.setSelectionRange(edit.value.length,edit.value.length);
}
```
